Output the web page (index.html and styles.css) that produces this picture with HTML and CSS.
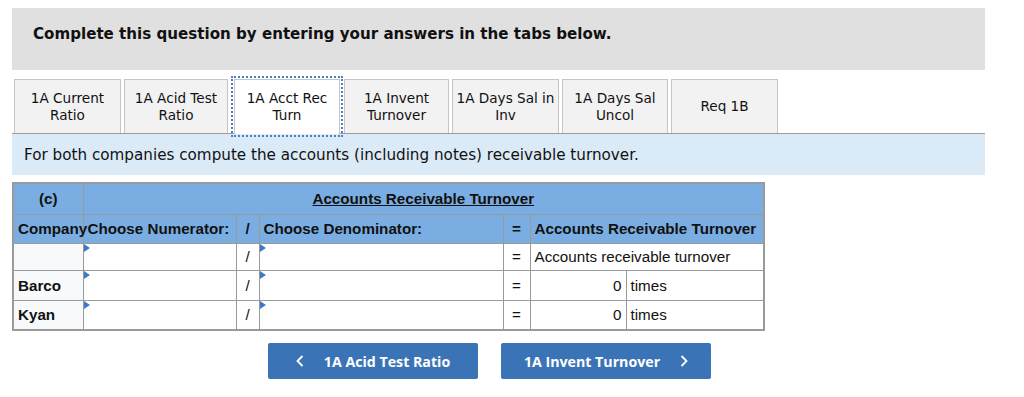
FILE: index.html
```html
<!DOCTYPE html>
<html lang="en">
<head>
    <meta charset="UTF-8">
    <title>Accounts Receivable Turnover</title>
    <link rel="stylesheet" href="styles.css">
</head>
<body>
    <div class="page">
        <div class="prompt">Complete this question by entering your answers in the tabs below.</div>

        <div class="tabs">
            <div class="tab w1">1A Current<br>Ratio</div>
            <div class="tab w2">1A Acid Test<br>Ratio</div>
            <div class="tab w3 active">1A Acct Rec<br>Turn</div>
            <div class="tab w4">1A Invent<br>Turnover</div>
            <div class="tab w5">1A Days Sal in<br>Inv</div>
            <div class="tab w6">1A Days Sal<br>Uncol</div>
            <div class="tab w7">Req 1B</div>
        </div>

        <div class="info">For both companies compute the accounts (including notes) receivable turnover.</div>

        <table class="grid">
            <colgroup>
                <col class="col-company">
                <col class="col-num">
                <col class="col-op">
                <col class="col-den">
                <col class="col-eq">
                <col class="col-value">
                <col class="col-unit">
            </colgroup>
            <tr class="head r1">
                <th class="center">(c)</th>
                <th colspan="6" class="center"><u>Accounts Receivable Turnover</u></th>
            </tr>
            <tr class="head r2">
                <th>Company</th>
                <th>Choose Numerator:</th>
                <th class="center">/</th>
                <th>Choose Denominator:</th>
                <th class="center">=</th>
                <th colspan="2">Accounts Receivable Turnover</th>
            </tr>
            <tr class="r3">
                <td class="label"></td>
                <td class="input"><span class="mark"></span></td>
                <td class="center">/</td>
                <td class="input"><span class="mark"></span></td>
                <td class="center">=</td>
                <td colspan="2">Accounts receivable turnover</td>
            </tr>
            <tr class="r4">
                <td class="label">Barco</td>
                <td class="input"><span class="mark"></span></td>
                <td class="center">/</td>
                <td class="input"><span class="mark"></span></td>
                <td class="center">=</td>
                <td class="value">0</td>
                <td>times</td>
            </tr>
            <tr class="r4">
                <td class="label">Kyan</td>
                <td class="input"><span class="mark"></span></td>
                <td class="center">/</td>
                <td class="input"><span class="mark"></span></td>
                <td class="center">=</td>
                <td class="value">0</td>
                <td>times</td>
            </tr>
        </table>

        <div class="nav">
            <button class="nav-btn prev">
                <svg class="chev" width="8" height="12" viewBox="0 0 8 12"><path d="M6.5 1 L1.5 6 L6.5 11" fill="none" stroke="white" stroke-width="1.8"/></svg>
                1A Acid Test Ratio
            </button>
            <button class="nav-btn next">
                1A Invent Turnover
                <svg class="chev" width="8" height="12" viewBox="0 0 8 12"><path d="M1.5 1 L6.5 6 L1.5 11" fill="none" stroke="white" stroke-width="1.8"/></svg>
            </button>
        </div>
    </div>
</body>
</html>
```

FILE: styles.css
```css
body {
    margin: 0;
    background-color: white;
    font-family: "DejaVu Sans", Verdana, sans-serif;
    color: #111;
}
.page {
    width: 973px;
    padding: 8px 0 0 12px;
}
.prompt {
    height: 62px;
    box-sizing: border-box;
    padding: 17px 0 0 21px;
    background-color: #e0e0e0;
    font-size: 15.1px;
    font-weight: bold;
}
.tabs {
    display: flex;
    gap: 3px;
    margin-top: 9px;
    padding-left: 2px;
    border-bottom: 1px solid #9c9c9c;
    height: 54px;
}
.tab {
    box-sizing: border-box;
    height: 54px;
    display: flex;
    align-items: center;
    justify-content: center;
    text-align: center;
    font-size: 13.6px;
    line-height: 17px;
    background-color: #f2f2f2;
    border: 1px solid #c6c6c6;
    border-bottom: none;
    white-space: nowrap;
}
.tab.active {
    background-color: white;
    height: 55px;
    margin: 0 1px 0 3px;
    outline: 2px dotted #4a80c8;
    outline-offset: 1px;
    position: relative;
    z-index: 1;
}
.w1 { width: 107px; }
.w2 { width: 104px; }
.w3 { width: 106px; }
.w4 { width: 105px; }
.w5 { width: 107px; }
.w6 { width: 106px; }
.w7 { width: 107px; }
.info {
    height: 41px;
    box-sizing: border-box;
    padding: 12px 0 0 12px;
    background-color: #dbeaf7;
    font-size: 15.2px;
}
.grid {
    margin-top: 7px;
    border-collapse: collapse;
    table-layout: fixed;
    border: 2px solid #9a9a9a;
    width: 751px;
    font-family: "Liberation Sans", Arial, sans-serif;
    font-size: 15.2px;
}
.col-company { width: 70px; }
.col-num { width: 153px; }
.col-op { width: 23px; }
.col-den { width: 244px; }
.col-eq { width: 27px; }
.col-value { width: 96px; }
.col-unit { width: 138px; }
.grid th, .grid td {
    border: 1px solid #9a9a9a;
    padding: 0 4px;
    text-align: left;
    white-space: nowrap;
    overflow: visible;
}
.grid .center {
    text-align: center;
    padding: 0;
}
.head th {
    background-color: #7aaee2;
    font-weight: bold;
}
.r1 { height: 31px; }
.r2 { height: 29px; }
.r3 { height: 27px; }
.r4 { height: 30px; }
.label {
    background-color: #f8f9fb;
    font-weight: bold;
}
.grid td.input {
    position: relative;
    background-color: white;
}
.mark {
    position: absolute;
    left: 0;
    top: 0;
    width: 0;
    height: 0;
    border-top: 4px solid transparent;
    border-bottom: 4px solid transparent;
    border-left: 6px solid #3e7bc6;
}
.grid td.value {
    text-align: right;
}
.nav {
    display: flex;
    gap: 23px;
    margin: 12px 0 0 256px;
}
.nav-btn {
    width: 210px;
    height: 36px;
    border: none;
    border-radius: 2px;
    background-color: #3b74b6;
    color: white;
    font-family: "Open Sans", sans-serif;
    font-weight: bold;
    font-size: 14.2px;
    display: flex;
    align-items: center;
    justify-content: center;
    gap: 20px;
    cursor: pointer;
}
```
